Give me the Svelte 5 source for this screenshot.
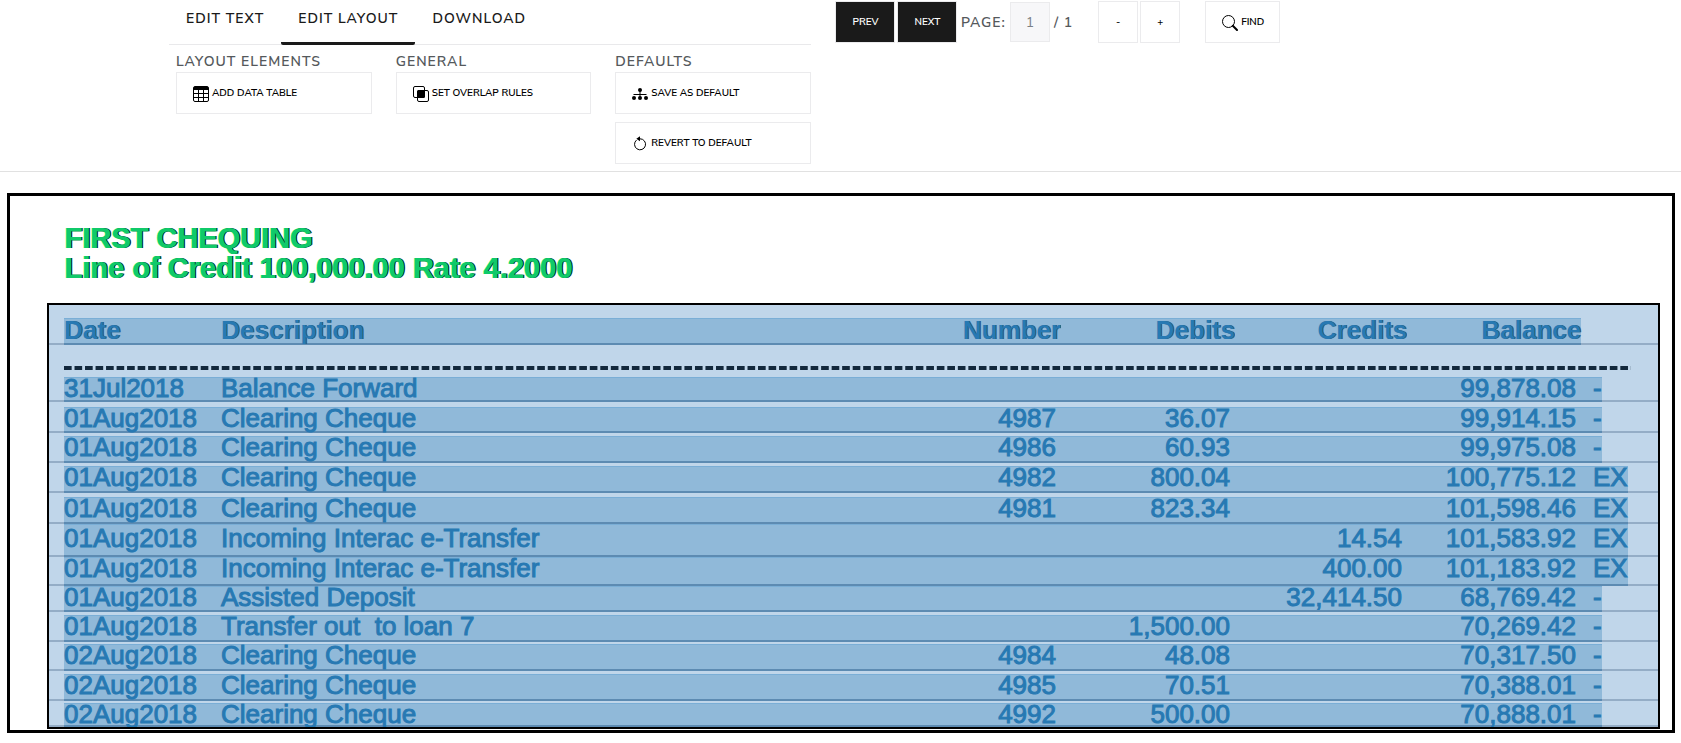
<script>
  const tabs = ['Edit Text', 'Edit Layout', 'Download'];
  let active = $state('Edit Layout');
  let pageNumber = $state('1');

  const headings = ['Date', 'Description', 'Number', 'Debits', 'Credits', 'Balance'];

  // gap: space above the detected text band, band: its height, inset: text offset inside it
  const rows = [
    { gap: 0, band: 25, cells: ['31Jul2018', 'Balance Forward', '', '', '', '99,878.08', '-'] },
    { gap: 5, band: 26, cells: ['01Aug2018', 'Clearing Cheque', '4987', '36.07', '', '99,914.15', '-'] },
    { gap: 3, band: 27, cells: ['01Aug2018', 'Clearing Cheque', '4986', '60.93', '', '99,975.08', '-'] },
    { gap: 3, band: 27, cells: ['01Aug2018', 'Clearing Cheque', '4982', '800.04', '', '100,775.12', 'EX'] },
    { gap: 4, band: 27, cells: ['01Aug2018', 'Clearing Cheque', '4981', '823.34', '', '101,598.46', 'EX'] },
    { gap: 0, band: 33, inset: 3, cells: ['01Aug2018', 'Incoming Interac e-Transfer', '', '', '14.54', '101,583.92', 'EX'] },
    { gap: 0, band: 29, cells: ['01Aug2018', 'Incoming Interac e-Transfer', '', '', '400.00', '101,183.92', 'EX'] },
    { gap: 0, band: 26, cells: ['01Aug2018', 'Assisted Deposit', '', '', '32,414.50', '68,769.42', '-'] },
    { gap: 3, band: 27, cells: ['01Aug2018', 'Transfer out  to loan 7', '', '1,500.00', '', '70,269.42', '-'] },
    { gap: 2, band: 27, cells: ['02Aug2018', 'Clearing Cheque', '4984', '48.08', '', '70,317.50', '-'] },
    { gap: 3, band: 27, cells: ['02Aug2018', 'Clearing Cheque', '4985', '70.51', '', '70,388.01', '-'] },
    { gap: 2, band: 24, cells: ['02Aug2018', 'Clearing Cheque', '4992', '500.00', '', '70,888.01', '-'] }
  ];
</script>

<header class="toolbar">
  <div class="editor">
    <nav class="tabs">
      {#each tabs as tab}
        <button class="tab" class:active={active === tab} onclick={() => (active = tab)}>{tab}</button>
      {/each}
    </nav>
    <div class="groups">
      <section class="group">
        <h2>Layout elements</h2>
        <button class="btn">
          <svg viewBox="0 0 16 16" aria-hidden="true">
            <rect x="0.5" y="0.5" width="15" height="15" rx="1.5" fill="none" stroke="#000" />
            <path d="M1 1h14v3H1z" />
            <path d="M0 7.5h16M0 11.5h16M5.5 4v12M10.5 4v12" fill="none" stroke="#000" />
          </svg>
          Add data table
        </button>
      </section>
      <section class="group">
        <h2>General</h2>
        <button class="btn">
          <svg viewBox="0 0 16 16" aria-hidden="true">
            <rect x="0.5" y="0.5" width="11" height="11" rx="1.5" fill="none" stroke="#000" />
            <rect x="4.5" y="4.5" width="11" height="11" rx="1.5" fill="none" stroke="#000" />
            <path d="M4 5.500q0-1.500 1.500-1.500H12v6.500q0 1.500-1.500 1.500H4z" />
          </svg>
          Set overlap rules
        </button>
      </section>
      <section class="group">
        <h2>Defaults</h2>
        <button class="btn">
          <svg viewBox="0 0 16 16" aria-hidden="true">
            <circle cx="8" cy="4" r="2" />
            <circle cx="2" cy="12" r="2" />
            <circle cx="8" cy="12" r="2" />
            <circle cx="14" cy="12" r="2" />
            <path d="M8 5v6M1.500 8.500h13" fill="none" stroke="#000" />
          </svg>
          Save as default
        </button>
        <button class="btn">
          <svg viewBox="0 0 16 16" aria-hidden="true">
            <path d="M4.500 4.100A5.500 5.500 0 1 0 8 2.800" fill="none" stroke="#000" />
            <path d="M4.300 2.700 8 .300v5z" />
          </svg>
          Revert to default
        </button>
      </section>
    </div>
  </div>

  <div class="pager">
    <button class="btn dark">Prev</button>
    <button class="btn dark">Next</button>
    <label for="page-number">Page:</label>
    <input id="page-number" type="text" bind:value={pageNumber} />
    <span class="total">/ 1</span>
    <button class="btn square" aria-label="Zoom out">-</button>
    <button class="btn square" aria-label="Zoom in">+</button>
    <button class="btn find">
      <svg viewBox="0 0 16 16" aria-hidden="true">
        <circle cx="6.500" cy="6.500" r="6" fill="none" stroke="#000" />
        <path d="m10.800 10.800 4.200 4.200" fill="none" stroke="#000" stroke-width="2" stroke-linecap="round" />
      </svg>
      Find
    </button>
  </div>
</header>

<main class="sheet">
  <div class="title">
    <p>FIRST CHEQUING</p>
    <p>Line of Credit 100,000.00 Rate 4.2000</p>
  </div>
  <div class="region">
    <table>
      <thead>
        <tr>
          {#each headings as heading}
            <th scope="col">{heading}</th>
          {/each}
        </tr>
      </thead>
      <tbody>
        <tr class="rule"><td colspan="7"></td></tr>
        {#each rows as row}
          <tr style:padding-top="{row.gap}px">
            {#each row.cells as cell}
              <td style:height="{row.band}px" style:padding-top="{row.inset ?? 0}px">{cell}</td>
            {/each}
          </tr>
        {/each}
      </tbody>
    </table>
  </div>
</main>

<style>
  :global(body) {
    background: #fff;
    font-family: 'Nunito Sans', Nunito, Lato, sans-serif;
    color: #55595c;
  }

  .toolbar {
    display: grid;
    grid-template-columns: minmax(0, 642fr) minmax(0, 677fr);
    gap: 24px;
    padding: 0 169px 7px;
    border-bottom: 1px solid #e1e1e1;
  }

  .tabs {
    display: flex;
    border-bottom: 1px solid #e9e9eb;
  }

  .tab {
    margin-bottom: -1px;
    padding: 0 17px 4px;
    height: 45px;
    border: 0;
    border-bottom: 3px solid transparent;
    border-radius: 2px;
    background: none;
    font: 600 14px/20px 'Nunito Sans', Nunito, Lato, sans-serif;
    letter-spacing: 1px;
    text-transform: uppercase;
    color: #1a1a1a;
  }

  .tab.active {
    border-bottom-color: #1a1a1a;
  }

  .groups {
    display: grid;
    grid-template-columns: repeat(3, minmax(0, 1fr));
    gap: 24px;
    padding: 7px 0 0 7px;
  }

  .group {
    display: flex;
    flex-direction: column;
    gap: 8px;
  }

  h2 {
    margin: 0 0 -8px;
    font-size: 14px;
    line-height: 20px;
    font-weight: 600;
    letter-spacing: 1px;
    text-transform: uppercase;
  }

  .btn {
    display: flex;
    align-items: center;
    gap: 3px;
    box-sizing: border-box;
    height: 42px;
    padding: 0 15px 0 16px;
    border: 1px solid #ebebed;
    background: #fff;
    color: #000;
    font: 600 10px/16px 'Nunito Sans', Nunito, Lato, sans-serif;
    text-transform: uppercase;
    white-space: nowrap;
  }

  .btn svg {
    width: 16px;
    height: 16px;
    margin-top: 2px;
  }

  .pager {
    display: flex;
    align-items: center;
    align-self: start;
    gap: 2px;
    padding-top: 1px;
    font-size: 14px;
    font-weight: 600;
    letter-spacing: 1px;
    text-transform: uppercase;
  }

  .dark {
    justify-content: center;
    width: 60px;
    background: #1a1a1a;
    color: #fff;
  }

  .pager label {
    padding: 0 2px;
  }

  .pager input {
    box-sizing: border-box;
    width: 40px;
    height: 40px;
    border: 1px solid #ebebed;
    background: #f7f7f9;
    color: #7b8085;
    font: 14px/20px 'Nunito Sans', Nunito, Lato, sans-serif;
    text-align: center;
  }

  .total {
    padding: 0 23px 0 2px;
  }

  .square {
    justify-content: center;
    width: 40px;
    padding: 0;
  }

  .find {
    margin-left: 23px;
  }

  .sheet {
    margin: 21px 6px 10px 7px;
    border: 3px solid #000;
    font-family: 'Liberation Sans', Arial, sans-serif;
    font-size: 26px;
  }

  .title {
    padding: 27px 0 20px 55px;
    font-size: 29px;
    font-weight: 700;
    line-height: 30px;
    color: #10c96a;
    text-shadow: 1px 0 0 #06231f, -1px 0 0 #0be56d;
  }

  .title p {
    margin: 0;
  }

  .region {
    margin: 0 12px 1px 37px;
    border: 2px solid #000;
    background: #c0d6ea;
    overflow: hidden;
  }

  table,
  thead,
  tbody {
    display: block;
  }

  tr {
    display: grid;
    grid-template-columns: 157fr 663fr 177fr 174fr 172fr 174fr 77fr;
    padding-left: 15px;
    border-bottom: 2px solid #94adc6;
  }

  th,
  td {
    box-sizing: border-box;
    min-width: 0;
    margin-bottom: -2px;
    padding: 0;
    border-bottom: 2px solid #5d8bb2;
    background: #90b9d9;
    box-shadow: inset 0 1px #7aaed6;
    color: #2779b3;
    line-height: 24px;
    text-align: left;
    white-space: pre;
  }

  thead tr {
    padding-top: 13px;
  }

  th {
    height: 27px;
    text-shadow: 1px 0 0 #2c5876;
  }

  td {
    line-height: 22px;
    -webkit-text-stroke: 1px #2779b3;
  }

  th:nth-child(n + 3),
  td:nth-child(n + 3) {
    text-align: right;
  }

  td:nth-child(n + 3) {
    padding-right: 5px;
  }

  td:nth-child(7) {
    justify-self: start;
    padding-right: 0;
    padding-left: 12px;
  }

  .rule {
    display: block;
    padding: 21px 27px 7px 15px;
    border: 0;
  }

  .rule td {
    display: block;
    height: 4px;
    margin: 0;
    padding: 0;
    border: 0;
    box-shadow: none;
    background: linear-gradient(90deg, #12283c 0 70%, transparent 70%) 0 0 / calc(100% / 149) 100%;
  }
</style>
